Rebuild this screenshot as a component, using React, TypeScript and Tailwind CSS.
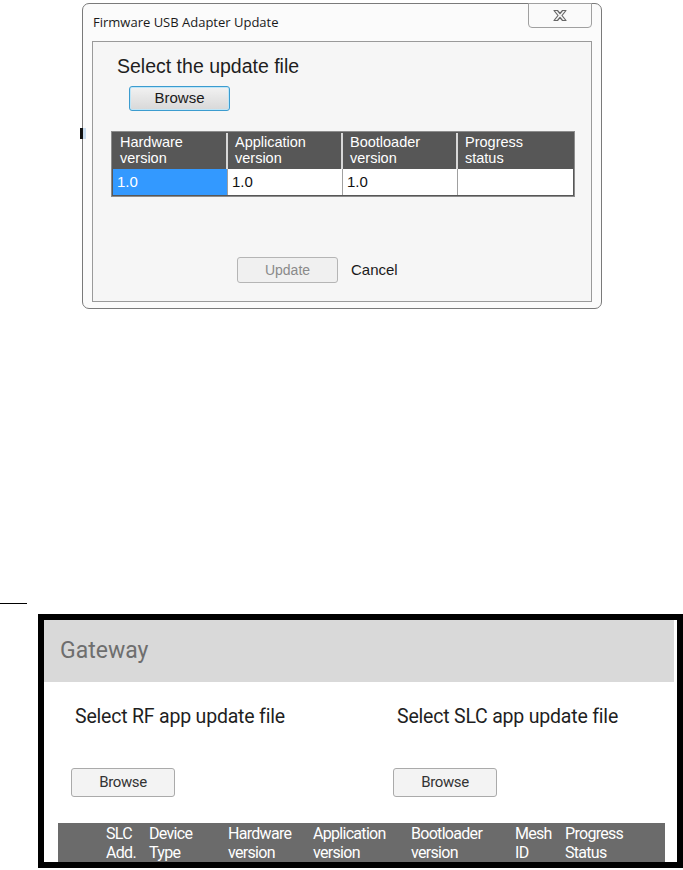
import React from 'react';

const dlgCols = [
  { head: ['Hardware', 'version'], val: '1.0', sel: true },
  { head: ['Application', 'version'], val: '1.0' },
  { head: ['Bootloader', 'version'], val: '1.0' },
  { head: ['Progress', 'status'], val: '' },
];

const gwCols = [
  { head: ['SLC', 'Add.'], w: 'w-[91px] pl-[48px]' },
  { head: ['Device', 'Type'], w: 'w-[79px]' },
  { head: ['Hardware', 'version'], w: 'w-[85px]' },
  { head: ['Application', 'version'], w: 'w-[98px]' },
  { head: ['Bootloader', 'version'], w: 'w-[104px]' },
  { head: ['Mesh', 'ID'], w: 'w-[50px]' },
  { head: ['Progress', 'Status'], w: 'w-[80px]' },
];

const FirmwareDialog: React.FC = () => {
  return (
    <div className="ml-[82px] mt-[3px] w-[520px] h-[306px] border border-[#7a7a7a] rounded-[7px] bg-[#fbfbfb] flex flex-col">
      <div className="h-[37px] flex items-start justify-between">
        <span className="pl-[10px] pt-[9px] text-[13px] text-[#1a1a1a] font-['Open_Sans',sans-serif] leading-[18px]">
          Firmware USB Adapter Update
        </span>
        <div className="mr-[9px] mt-[-1px] w-[64px] h-[25px] border border-[#a0a0a0] rounded-b-[4px] bg-[#fafafa] flex items-center justify-center">
          <svg width="16" height="13" viewBox="0 0 16 13">
            <path d="M2 1.5 L5.5 1.5 L8 4.5 L10.5 1.5 L14 1.5 L10 6.5 L14 11.5 L10.5 11.5 L8 8.5 L5.5 11.5 L2 11.5 L6 6.5 Z" fill="#f4f4f4" stroke="#666" strokeWidth="1.2" strokeLinejoin="round" />
          </svg>
        </div>
      </div>
      <div className="mx-[9px] mb-[6px] flex-1 border border-[#9a9a9a] bg-[#f6f6f6] flex flex-col font-['Liberation_Sans',sans-serif]">
        <div className="pl-[24px] pt-[12px] text-[19.5px] leading-[24px] text-[#1e1e1e]">Select the update file</div>
        <button className="ml-[36px] mt-[8px] w-[101px] h-[25px] border border-[#3c9ccf] rounded-[3px] bg-gradient-to-b from-[#f2f2f2] to-[#d8d8d8] text-[15px] text-[#1a1a1a] shadow-[inset_0_0_0_1px_#bfe6f8]">
          Browse
        </button>
        <div className="relative">
          <div className="absolute left-[-13px] top-[17px] w-[3px] h-[11px] bg-[#111]" />
          <div className="absolute left-[-10px] top-[17px] w-[3px] h-[11px] bg-[#c9dcef]" />
        </div>
        <div className="ml-[18px] mt-[20px] w-[464px] border border-[#8c8c8c] bg-[#575757] p-[1px]">
          <div className="grid grid-cols-4">
            {dlgCols.map((c, i) => (
              <div key={i} className={`h-[36px] px-[7px] pt-[1px] text-white text-[14.5px] leading-[16px] ${i < 3 ? 'border-r-2 border-[#d8d8d8]' : ''}`}>
                <div>{c.head[0]}</div>
                <div>{c.head[1]}</div>
              </div>
            ))}
          </div>
          <div className="grid grid-cols-4 bg-white">
            {dlgCols.map((c, i) => (
              <div key={i} className={`h-[26px] px-[4px] text-[15px] leading-[26px] ${c.sel ? 'bg-[#3399ff] text-white' : 'text-[#111]'} ${i < 3 ? 'border-r border-[#a0a0a0]' : ''}`}>
                {c.val}
              </div>
            ))}
          </div>
        </div>
        <div className="mt-[60px] ml-[144px] flex items-center gap-[13px]">
          <button className="w-[101px] h-[26px] border border-[#b5b5b5] rounded-[3px] bg-[#f0f0f0] text-[14px] text-[#8a8a8a]">Update</button>
          <span className="text-[15px] text-[#1a1a1a]">Cancel</span>
        </div>
      </div>
    </div>
  );
};

const BrowseBlock: React.FC<{ label: string; w: string }> = ({ label, w }) => (
  <div className={`${w} pl-[31px] flex flex-col`}>
    <span className="text-[19.5px] leading-[22px] text-[#1f1f1f] tracking-[-0.2px]">{label}</span>
    <button className="ml-[-4px] mt-[40px] w-[104px] h-[29px] border border-[#aaa] rounded-[3px] bg-[#f3f3f3] text-[15px] text-[#333] tracking-[-0.4px]">Browse</button>
  </div>
);

const GatewayPanel: React.FC = () => {
  return (
    <div className="ml-[38px] w-[645px] h-[254px] border-[6px] border-black bg-white flex flex-col font-['Roboto',sans-serif]">
      <div className="h-[62px] mr-[3px] bg-[#d9d9d9] flex items-center pl-[16px] text-[23px] text-[#6e6e6e]">
        Gateway
      </div>
      <div className="flex pt-[24px]">
        <BrowseBlock label="Select RF app update file" w="w-[322px]" />
        <BrowseBlock label="Select SLC app update file" w="flex-1" />
      </div>
      <div className="ml-[14px] mr-[12px] mt-[26px] h-[39px] bg-[#6b6b6b] flex text-white text-[16px] leading-[19px] tracking-[-0.7px]">
        {gwCols.map((c, i) => (
          <div key={i} className={`${c.w} pt-[1px]`}>
            <div>{c.head[0]}</div>
            <div>{c.head[1]}</div>
          </div>
        ))}
      </div>
    </div>
  );
};

export default function App() {
  return (
    <div className="w-[683px] h-[870px] bg-white overflow-hidden">
      <FirmwareDialog />
      <div className="mt-[294px] w-[27px] h-px bg-black" />
      <div className="mt-[10px]">
        <GatewayPanel />
      </div>
    </div>
  );
}
